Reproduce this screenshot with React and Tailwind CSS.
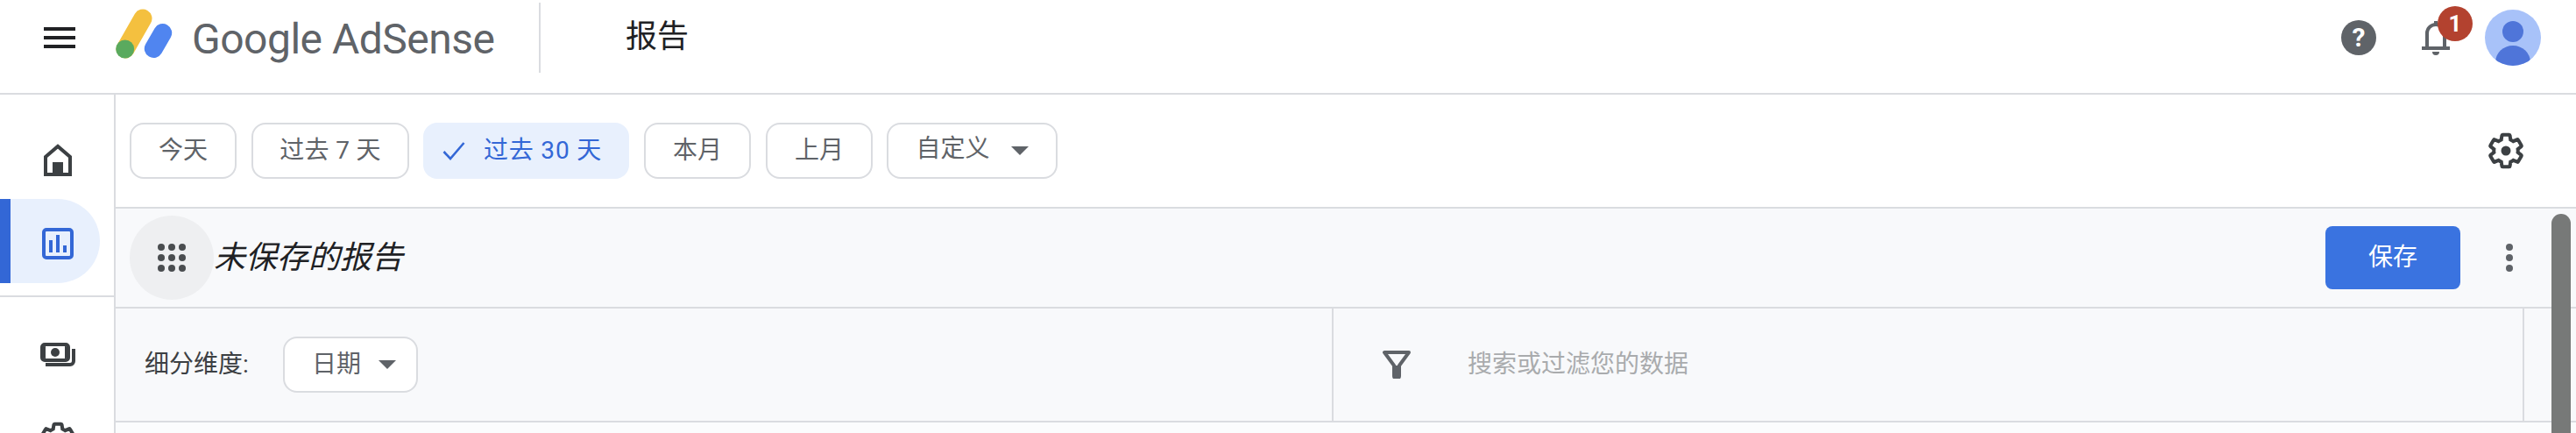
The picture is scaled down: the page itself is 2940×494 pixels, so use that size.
import React from "react";

const GEAR = "M19.43 12.98c.04-.32.07-.64.07-.98s-.03-.66-.07-.98l2.11-1.65c.19-.15.24-.42.12-.64l-2-3.46c-.12-.22-.39-.3-.61-.22l-2.49 1c-.52-.4-1.08-.73-1.69-.98l-.38-2.65C14.46 2.18 14.25 2 14 2h-4c-.25 0-.46.18-.49.42l-.38 2.65c-.61.25-1.17.59-1.69.98l-2.49-1c-.23-.09-.49 0-.61.22l-2 3.46c-.13.22-.07.49.12.64l2.11 1.65c-.04.32-.07.65-.07.98s.03.66.07.98l-2.11 1.65c-.19.15-.24.42-.12.64l2 3.46c.12.22.39.3.61.22l2.49-1c.52.4 1.08.73 1.69.98l.38 2.65c.03.24.24.42.49.42h4c.25 0 .46-.18.49-.42l.38-2.65c.61-.25 1.17-.59 1.69-.98l2.49 1c.23.09.49 0 .61-.22l2-3.46c.12-.22.07-.49-.12-.64l-2.11-1.65z";

const Chip = ({ children, className = "" }) => (
  <div className={`h-[64px] flex items-center justify-center rounded-[16px] border-2 border-[#dadce0] bg-white text-[28px] text-[#5f6368] whitespace-pre ${className}`}>
    {children}
  </div>
);

const Caret = ({ className = "" }) => (
  <svg width="20" height="10" viewBox="0 0 20 10" className={className}>
    <path d="M0 0h20L10 10z" fill="#5f6368" />
  </svg>
);

function Header() {
  return (
    <div className="h-[108px] flex items-start border-b-2 border-[#dadce0] bg-white">
      <svg width="48" height="48" viewBox="0 0 48 48" className="ml-[44px] mt-[19px] shrink-0">
        <path d="M6 12h36v4H6zM6 22h36v4H6zM6 32h36v4H6z" fill="#202124" />
      </svg>
      <svg width="70" height="60" viewBox="0 0 70 60" className="ml-[38px] mt-[8px] shrink-0">
        <line x1="33" y1="13" x2="13" y2="48" stroke="#f4c03f" strokeWidth="21" strokeLinecap="round" />
        <line x1="55.7" y1="29.5" x2="45.3" y2="47.5" stroke="#5085f0" strokeWidth="21" strokeLinecap="round" />
        <circle cx="12.7" cy="48" r="10.5" fill="#5aaa5e" />
      </svg>
      <div className="ml-[19px] mt-[15px] w-[352px] shrink-0 text-[48px] leading-[60px] tracking-[-0.5px] text-[#5f6368] whitespace-nowrap">
        Google AdSense
      </div>
      <div className="ml-[44px] mt-[3px] h-[80px] w-[2px] bg-[#dadce0]" />
      <div className="ml-[97px] mt-[17px] text-[36px] leading-[50px] text-[#202124]">报告</div>

      <div className="ml-auto mt-[11px] mr-[40px] flex items-start">
        <div className="mt-[12px] w-[40px] h-[40px] rounded-full bg-[#5f6368] flex items-center justify-center text-white text-[30px] font-bold leading-none">?</div>
        <div className="relative ml-[52px] mt-[13px] w-[32px] h-[40px]">
          <svg width="32" height="40" viewBox="0 0 32 40">
            <rect x="14" y="0" width="4" height="6" fill="#5f6368" />
            <path d="M6 30V14a10 10 0 0 1 20 0v16" fill="none" stroke="#5f6368" strokeWidth="4" />
            <rect x="0" y="29" width="32" height="4" fill="#5f6368" />
            <path d="M12 35h8a4 4 0 0 1-8 0z" fill="#5f6368" />
          </svg>
          <div className="absolute left-[18px] top-[-17px] w-[40px] h-[40px] rounded-full bg-[#b3422f] flex items-center justify-center text-white text-[26px] font-bold leading-none">1</div>
        </div>
        <svg width="64" height="64" viewBox="0 0 64 64" className="ml-[40px]">
          <defs>
            <clipPath id="avatarClip"><circle cx="32" cy="32" r="32" /></clipPath>
          </defs>
          <circle cx="32" cy="32" r="32" fill="#a8c2f9" />
          <circle cx="32" cy="25" r="12" fill="#4f75d9" />
          <ellipse cx="32" cy="60" rx="20" ry="19" fill="#4f75d9" clipPath="url(#avatarClip)" />
        </svg>
      </div>
    </div>
  );
}

function Sidebar() {
  return (
    <div className="w-[132px] shrink-0 border-r-2 border-[#dadce0] bg-white overflow-hidden">
      <svg width="36" height="38" viewBox="0 0 36 38" className="ml-[48px] mt-[56px]">
        <path d="M4 35V15L18 3l14 12v20z" fill="none" stroke="#3c4043" strokeWidth="4" />
        <rect x="12" y="21" width="12" height="15" fill="#3c4043" />
      </svg>
      <div className="mt-[25px] h-[96px] w-[114px] flex rounded-r-[48px] bg-[#e8f0fd]">
        <div className="w-[12px] bg-[#3367d6]" />
        <svg width="36" height="36" viewBox="0 0 36 36" className="ml-[36px] mt-[33px]">
          <rect x="2" y="2" width="32" height="32" rx="3" fill="none" stroke="#3367d6" strokeWidth="4" />
          <path d="M8 14h4v14H8zM16 8h4v20h-4zM24 20h4v8h-4z" fill="#3367d6" />
        </svg>
      </div>
      <div className="mt-[14px] h-[2px] bg-[#dadce0]" />
      <svg width="44" height="32" viewBox="0 0 44 32" className="ml-[44px] mt-[50px]">
        <rect x="4" y="4" width="30" height="18" rx="3" fill="none" stroke="#3c4043" strokeWidth="4" />
        <path d="M4 8l4-3v16l-4-3zM34 8l-4-3v16l4-3z" fill="#3c4043" />
        <circle cx="19" cy="13" r="5" fill="#3c4043" />
        <path d="M8 27h28a4 4 0 0 0 4-4V9" fill="none" stroke="#3c4043" strokeWidth="4" />
      </svg>
      <svg width="44" height="44" viewBox="0 0 24 24" className="ml-[44px] mt-[59px]">
        <path d={GEAR} fill="none" stroke="#3c4043" strokeWidth="2.2" />
      </svg>
    </div>
  );
}

function Toolbar() {
  return (
    <div className="h-[130px] flex items-start pt-[32px] pl-[16px] border-b-2 border-[#dadce0] bg-white">
      <Chip className="w-[122px]">今天</Chip>
      <Chip className="ml-[17px] w-[180px] tracking-[0.3px]">过去 7 天</Chip>
      <div className="ml-[16px] w-[235px] h-[64px] flex items-center rounded-[16px] bg-[#e8f0fd] text-[28px] tracking-[0.8px] text-[#3367d6] whitespace-pre">
        <svg width="26" height="22" viewBox="0 0 26 22" className="ml-[22px] mr-[21px]">
          <path d="M1.5 12l7.5 8L24.5 2" fill="none" stroke="#3367d6" strokeWidth="2.6" />
        </svg>
        过去 30 天
      </div>
      <Chip className="ml-[17px] w-[122px]">本月</Chip>
      <Chip className="ml-[17px] w-[122px]">上月</Chip>
      <Chip className="ml-[16px] w-[195px]">
        <span className="relative top-[-2px]">自定义</span>
        <Caret className="ml-[24px]" />
      </Chip>
      <svg width="44" height="44" viewBox="0 0 24 24" className="ml-auto mr-[58px] mt-[10px]">
        <path d={GEAR} fill="none" stroke="#3c4043" strokeWidth="2.2" />
        <circle cx="12" cy="12" r="3" fill="#3c4043" />
      </svg>
    </div>
  );
}

function ReportRow() {
  return (
    <div className="h-[114px] flex items-start pl-[16px] border-b-2 border-[#dadce0] bg-[#f8f9fb]">
      <div className="mt-[8px] w-[96px] h-[96px] rounded-full bg-[#eeeff1] flex items-center justify-center shrink-0">
        <svg width="32" height="32" viewBox="0 0 32 32">
          {[4, 16, 28].map((y) =>
            [4, 16, 28].map((x) => <circle key={`${x}-${y}`} cx={x} cy={y} r="4" fill="#4a4d50" />)
          )}
        </svg>
      </div>
      <div className="mt-[31px] text-[36px] leading-[50px] italic text-[#202124]">未保存的报告</div>
      <div className="ml-auto mt-[20px] w-[154px] h-[72px] rounded-[8px] bg-[#3a73e0] flex items-center justify-center text-[28px] text-white">保存</div>
      <svg width="8" height="32" viewBox="0 0 8 32" className="ml-[52px] mr-[72px] mt-[40px]">
        <circle cx="4" cy="4" r="4" fill="#5f6368" />
        <circle cx="4" cy="16" r="4" fill="#5f6368" />
        <circle cx="4" cy="28" r="4" fill="#5f6368" />
      </svg>
    </div>
  );
}

function BreakdownRow() {
  return (
    <div className="h-[130px] flex border-b-2 border-[#dadce0] bg-[#f8f9fb]">
      <div className="w-[1390px] flex items-center pl-[33px] border-r-2 border-[#dadce0] shrink-0">
        <span className="w-[158px] shrink-0 text-[28px] text-[#3c4043] whitespace-nowrap">细分维度:</span>
        <Chip className="w-[154px] pl-[8px]">
          日期
          <Caret className="ml-[20px]" />
        </Chip>
      </div>
      <div className="flex-1 flex items-center pl-[56px]">
        <svg width="32" height="32" viewBox="0 0 32 32" className="shrink-0">
          <path d="M2 2h28L19 17v12a2 2 0 0 1-2 2h-2a2 2 0 0 1-2-2V17z" fill="none" stroke="#5f6368" strokeWidth="4" strokeLinejoin="round" />
          <rect x="13" y="17" width="6" height="14" rx="2" fill="#5f6368" />
        </svg>
        <span className="ml-[65px] text-[28px] text-[#a9abad]">搜索或过滤您的数据</span>
      </div>
      <div className="w-[61px] border-l-2 border-[#dadce0] shrink-0" />
    </div>
  );
}

export default function App() {
  return (
    <div className="relative h-[494px] overflow-hidden bg-white font-['Roboto','Noto_Sans_CJK_SC',sans-serif]">
      <Header />
      <div className="flex h-[386px]">
        <Sidebar />
        <div className="flex-1 min-w-0 bg-[#fbfcfd]">
          <Toolbar />
          <ReportRow />
          <BreakdownRow />
        </div>
      </div>
      {/* scrollbar sits over the table area */}
      <div className="absolute left-[2912px] top-[244px] w-[22px] h-[260px] rounded-t-[11px] bg-[#777978]" />
    </div>
  );
}
